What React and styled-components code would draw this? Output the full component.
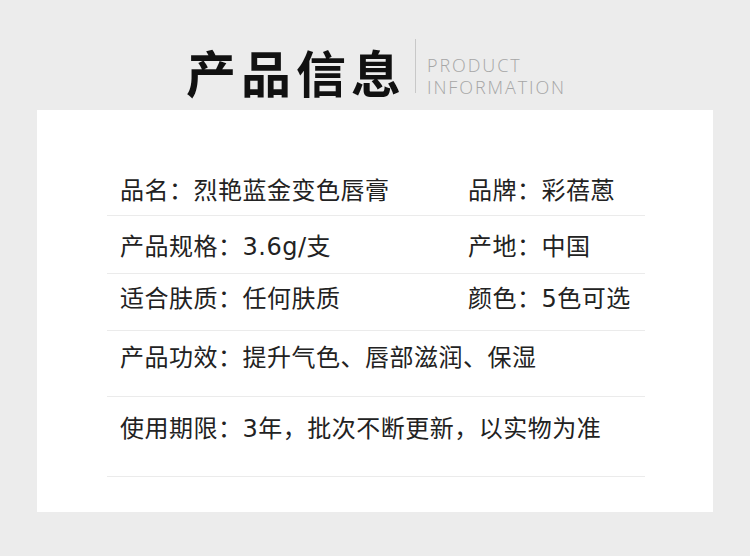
import React from 'react';
import styled, { createGlobalStyle } from 'styled-components';

const GlobalStyle = createGlobalStyle`
	body {
		margin: 0;
		background: #ececec;
		font-family: "Noto Sans CJK SC", "Noto Sans", sans-serif;
	}
`;

const rows = [
	{ left: '品名：烈艳蓝金变色唇膏', right: '品牌：彩蓓蒽', top: 66, bottom: 9, first: true },
	{ left: '产品规格：3.6g/支', right: '产地：中国', top: 16, bottom: 11 },
	{ left: '适合肤质：任何肤质', right: '颜色：5色可选', top: 10, bottom: 16 },
	{ left: '产品功效：提升气色、唇部滋润、保湿', top: 12, bottom: 23 },
	{ left: '使用期限：3年，批次不断更新，以实物为准', top: 17, bottom: 32, last: true },
];

const App = () => (
	<Page>
		<GlobalStyle />
		<Header>
			<Title>产品信息</Title>
			<Divider />
			<Subtitle>
				<span>PRODUCT</span>
				<span>INFORMATION</span>
			</Subtitle>
		</Header>
		<Card>
			{rows.map((r, i) => (
				<Row key={i} $top={r.top} $bottom={r.bottom} $first={r.first} $last={r.last}>
					<Cell>{r.left}</Cell>
					{r.right && <Cell>{r.right}</Cell>}
				</Row>
			))}
		</Card>
	</Page>
);

const Page = styled.div`
	width: 750px;
	height: 556px;
	overflow: hidden;
	display: flex;
	flex-direction: column;
	align-items: center;
`;
const Header = styled.div`
	display: flex;
	align-items: flex-start;
	height: 110px;
	padding-left: 2px;
`;
const Title = styled.h1`
	margin: 46px 0 0 0;
	font-size: 50px;
	font-weight: 700;
	letter-spacing: 5px;
	color: #111;
	line-height: 1;
`;
const Divider = styled.div`
	width: 1px;
	height: 54px;
	background: #c8c8c8;
	margin: 39px 11px 0 9px;
`;
const Subtitle = styled.div`
	display: flex;
	flex-direction: column;
	margin-top: 54px;
	font-family: "Open Sans", "Noto Sans", sans-serif;
	font-weight: 300;
	font-size: 18px;
	letter-spacing: 1.9px;
	color: #a6a6a6;
	line-height: 22px;
`;
const Card = styled.div`
	width: 676px;
	background: #fff;
	padding: 0 68px 35px 70px;
	box-sizing: border-box;
	display: flex;
	flex-direction: column;
`;
const Row = styled.div`
	display: grid;
	grid-template-columns: 348px 1fr;
	padding: ${(p) => p.$top}px 0 ${(p) => p.$bottom}px 13px;
	border-top: ${(p) => (p.$first ? 'none' : '1px solid #ebebeb')};
	border-bottom: ${(p) => (p.$last ? '1px solid #ebebeb' : 'none')};
	font-family: "DejaVu Sans", "Noto Sans CJK SC", sans-serif;
	font-size: 24px;
	letter-spacing: 0.5px;
	line-height: 30px;
	color: #222;
`;
const Cell = styled.div`
	white-space: nowrap;
`;

export default App;
